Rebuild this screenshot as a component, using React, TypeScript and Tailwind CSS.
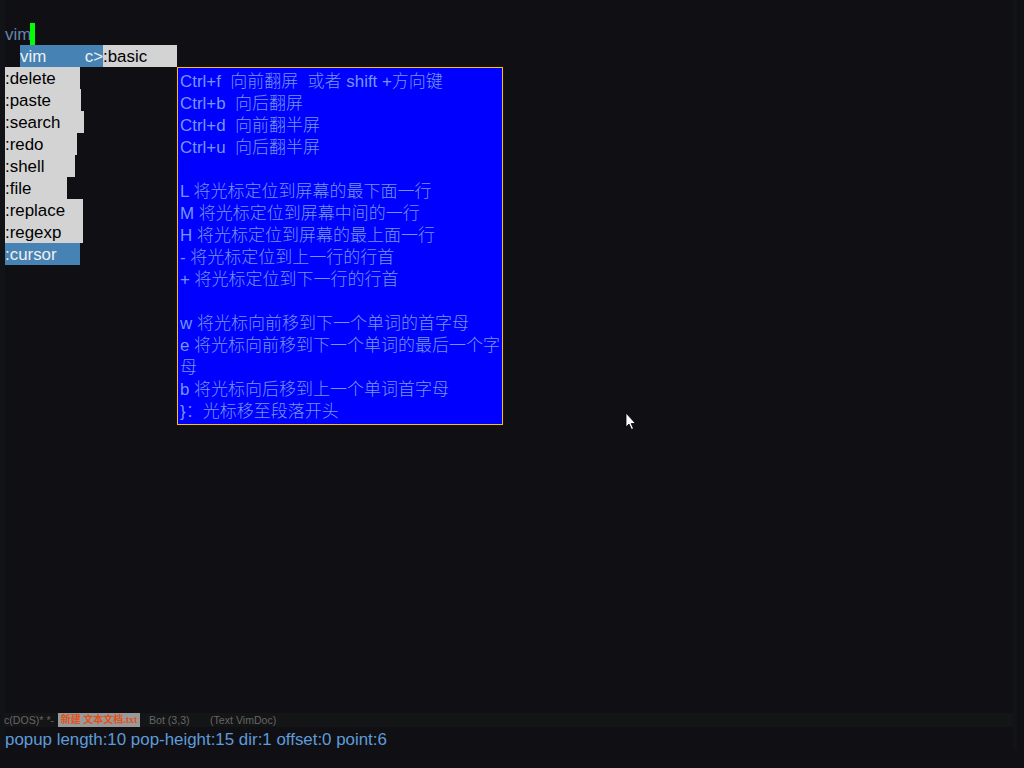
const lines = [
  "Ctrl+f  向前翻屏  或者 shift +方向键",
  "Ctrl+b  向后翻屏",
  "Ctrl+d  向前翻半屏",
  "Ctrl+u  向后翻半屏",
  "",
  "L 将光标定位到屏幕的最下面一行",
  "M 将光标定位到屏幕中间的一行",
  "H 将光标定位到屏幕的最上面一行",
  "- 将光标定位到上一行的行首",
  "+ 将光标定位到下一行的行首",
  "",
  "w 将光标向前移到下一个单词的首字母",
  "e 将光标向前移到下一个单词的最后一个字",
  "母",
  "b 将光标向后移到上一个单词首字母",
  "}：光标移至段落开头",
];

const menu = [
  { label: ":delete", w: "w-[75px]" },
  { label: ":paste", w: "w-[76px]" },
  { label: ":search", w: "w-[79px]" },
  { label: ":redo", w: "w-[72px]" },
  { label: ":shell", w: "w-[70px]" },
  { label: ":file", w: "w-[62px]" },
  { label: ":replace", w: "w-[78px]" },
  { label: ":regexp", w: "w-[78px]" },
];

function Line({ text }: { text: string }) {
  const parts = text.split(/([\u3000-\u9fff\uff00-\uffef]+)/);
  return (
    <div className="h-[22px] leading-[23px] whitespace-pre overflow-hidden">
      {parts.map((p, i) =>
        i % 2 === 1 ? (
          <span key={i} className="font-light text-[17px]">
            {p}
          </span>
        ) : (
          <span key={i}>{p}</span>
        )
      )}
    </div>
  );
}

export default function App() {
  return (
    <div className="w-[1024px] h-[768px] bg-[#101014] overflow-hidden flex text-[16.9px] leading-[23px] font-['Liberation_Sans','Noto_Sans_CJK_SC',sans-serif]">
      <div className="w-[5px] h-[750px] bg-[#121316]" />
      <div className="w-[1008px] h-[750px] flex flex-col pt-[23px]">
        <div className="h-[22px] flex text-[#6585ad]">
          <span className="w-[25px]">vim</span>
          <span className="w-[5px] h-[22px] bg-[#00ff00]" />
        </div>
        <div className="h-[22px] flex ml-[15px]">
          <div className="w-[83px] bg-[#4682b4] text-[#f0f0f0] flex justify-between">
            <span>vim</span>
            <span>c&gt;</span>
          </div>
          <div className="w-[74px] bg-[#d3d3d3] text-black">:basic</div>
        </div>
        <div className="flex items-start">
          <div className="w-[172px] flex flex-col">
            {menu.map((m) => (
              <div key={m.label} className={`${m.w} h-[22px] bg-[#d3d3d3] text-black`}>
                {m.label}
              </div>
            ))}
            <div className="w-[75px] h-[22px] bg-[#4682b4] text-[#f0f0f0]">:cursor</div>
          </div>
          <div className="w-[326px] border border-[#ffc000] bg-[#0000ff] text-[#7596f0] py-[2px] pl-[2px]">
            {lines.map((l, i) => (
              <Line key={i} text={l} />
            ))}
          </div>
          <svg width="12" height="19" viewBox="0 0 12 19" className="ml-[122px] mt-[345px]">
            <path d="M1 1 L1 15 L4 12 L6.5 17.5 L8.5 16.5 L6.2 11.5 L10.5 11.5 Z" fill="#ffffff" stroke="#000000" strokeWidth="0.8" />
          </svg>
        </div>
        <div className="flex-1" />
        <div className="h-[14px] bg-[#141516] flex items-center text-[10.6px] leading-[14px] text-[#666666] -ml-[1px]">
          <span className="w-[54px] whitespace-pre">c(DOS)* *-</span>
          <span className="w-[82px] h-[14px] bg-[#999999] text-[#e0521a] font-bold text-center text-[10px] whitespace-pre font-['Liberation_Serif','Noto_Sans_CJK_SC',serif]">
            新建 文本文档.txt
          </span>
          <span className="ml-[9px] w-[61px]">Bot (3,3)</span>
          <span>(Text VimDoc)</span>
        </div>
        <div className="h-[23px] pt-[1px] text-[#5f9bd8] whitespace-pre">
          popup length:10 pop-height:15 dir:1 offset:0 point:6
        </div>
      </div>
      <div className="w-[4px] h-[749px] bg-[#121316]" />
    </div>
  );
}
